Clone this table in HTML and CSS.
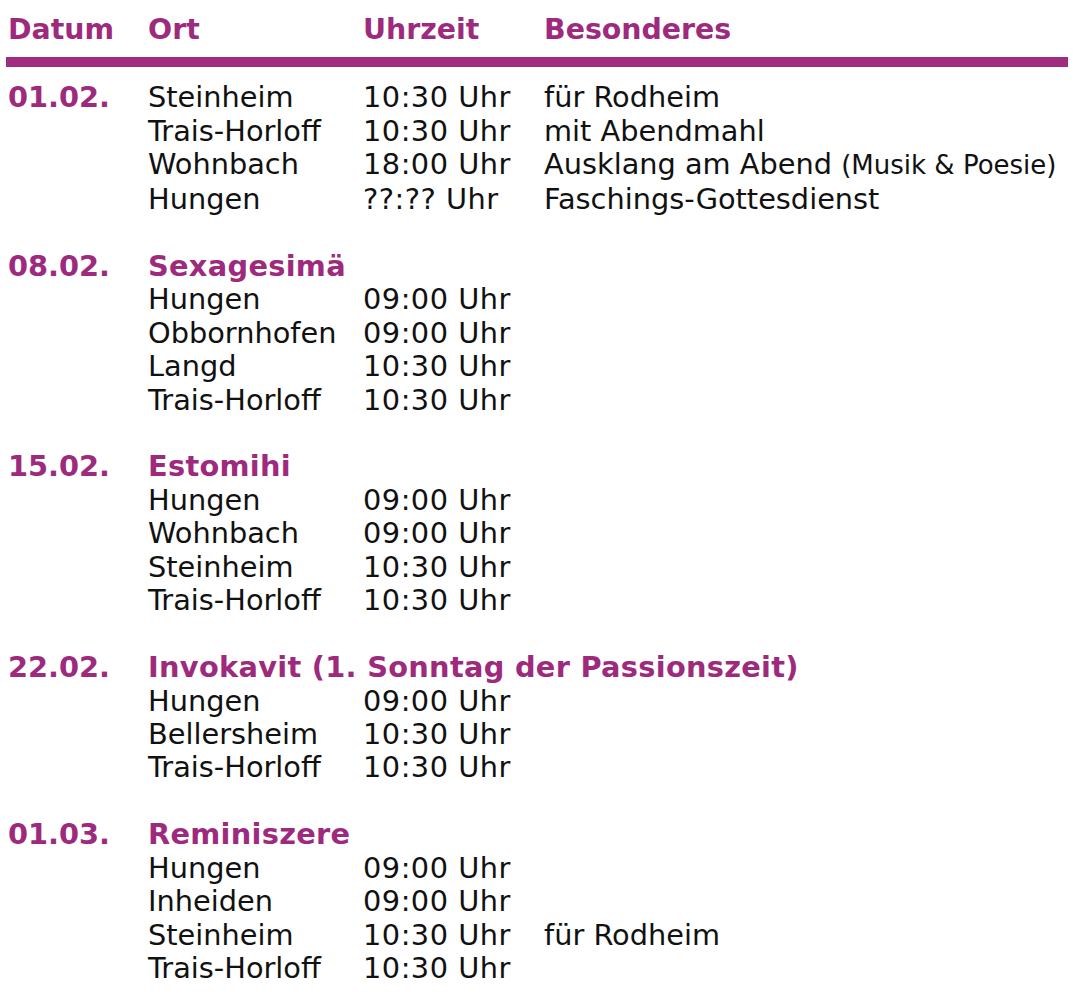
FILE: index.html
```html
<!DOCTYPE html>
<html lang="de">
<head>
<meta charset="utf-8">
<title>Gottesdienste</title>
<link rel="stylesheet" href="styles.css">
</head>
<body>
<div class="plan">
  <div class="row head">
    <div>Datum</div><div>Ort</div><div>Uhrzeit</div><div>Besonderes</div>
  </div>
  <div class="bar"></div>

  <div class="section">
    <div class="row"><div class="date">01.02.</div><div>Steinheim</div><div class="time">10:30 Uhr</div><div>für Rodheim</div></div>
    <div class="row"><div></div><div>Trais-Horloff</div><div class="time">10:30 Uhr</div><div>mit Abendmahl</div></div>
    <div class="row"><div></div><div>Wohnbach</div><div class="time">18:00 Uhr</div><div>Ausklang am Abend <span class="small">(Musik &amp; Poesie)</span></div></div>
    <div class="row"><div></div><div>Hungen</div><div class="time">??:?? Uhr</div><div>Faschings-Gottesdienst</div></div>
  </div>

  <div class="section">
    <div class="row"><div class="date">08.02.</div><div class="title">Sexagesimä</div></div>
    <div class="row"><div></div><div>Hungen</div><div class="time">09:00 Uhr</div><div></div></div>
    <div class="row"><div></div><div>Obbornhofen</div><div class="time">09:00 Uhr</div><div></div></div>
    <div class="row"><div></div><div>Langd</div><div class="time">10:30 Uhr</div><div></div></div>
    <div class="row"><div></div><div>Trais-Horloff</div><div class="time">10:30 Uhr</div><div></div></div>
  </div>

  <div class="section">
    <div class="row"><div class="date">15.02.</div><div class="title">Estomihi</div></div>
    <div class="row"><div></div><div>Hungen</div><div class="time">09:00 Uhr</div><div></div></div>
    <div class="row"><div></div><div>Wohnbach</div><div class="time">09:00 Uhr</div><div></div></div>
    <div class="row"><div></div><div>Steinheim</div><div class="time">10:30 Uhr</div><div></div></div>
    <div class="row"><div></div><div>Trais-Horloff</div><div class="time">10:30 Uhr</div><div></div></div>
  </div>

  <div class="section">
    <div class="row"><div class="date">22.02.</div><div class="title">Invokavit (1. Sonntag der Passionszeit)</div></div>
    <div class="row"><div></div><div>Hungen</div><div class="time">09:00 Uhr</div><div></div></div>
    <div class="row"><div></div><div>Bellersheim</div><div class="time">10:30 Uhr</div><div></div></div>
    <div class="row"><div></div><div>Trais-Horloff</div><div class="time">10:30 Uhr</div><div></div></div>
  </div>

  <div class="section">
    <div class="row"><div class="date">01.03.</div><div class="title">Reminiszere</div></div>
    <div class="row"><div></div><div>Hungen</div><div class="time">09:00 Uhr</div><div></div></div>
    <div class="row"><div></div><div>Inheiden</div><div class="time">09:00 Uhr</div><div></div></div>
    <div class="row"><div></div><div>Steinheim</div><div class="time">10:30 Uhr</div><div>für Rodheim</div></div>
    <div class="row"><div></div><div>Trais-Horloff</div><div class="time">10:30 Uhr</div><div></div></div>
  </div>
</div>
</body>
</html>
```

FILE: styles.css
```css
html, body {
  margin: 0;
  padding: 0;
  background: #ffffff;
}

.plan {
  padding: 13px 8px 0 8px;
  font-family: "DejaVu Sans", Verdana, sans-serif;
  font-size: 28.8px;
  line-height: 33.45px;
  color: #111111;
}

.row {
  display: grid;
  grid-template-columns: 140px 215px 181px 1fr;
  white-space: nowrap;
}

.head {
  font-weight: bold;
  font-size: 28.4px;
  color: #9d2a7d;
}

.bar {
  height: 10px;
  background: #a02b7f;
  margin: 11px 4px 14px -2px;
}

.section {
  margin-bottom: 33.45px;
}

.date {
  font-weight: bold;
  color: #9d2a7d;
}

.title {
  grid-column: 2 / 5;
  font-weight: bold;
  color: #9d2a7d;
  letter-spacing: 0.3px;
}

.time {
  letter-spacing: 0.5px;
}

.small {
  font-size: 26px;
}
```
